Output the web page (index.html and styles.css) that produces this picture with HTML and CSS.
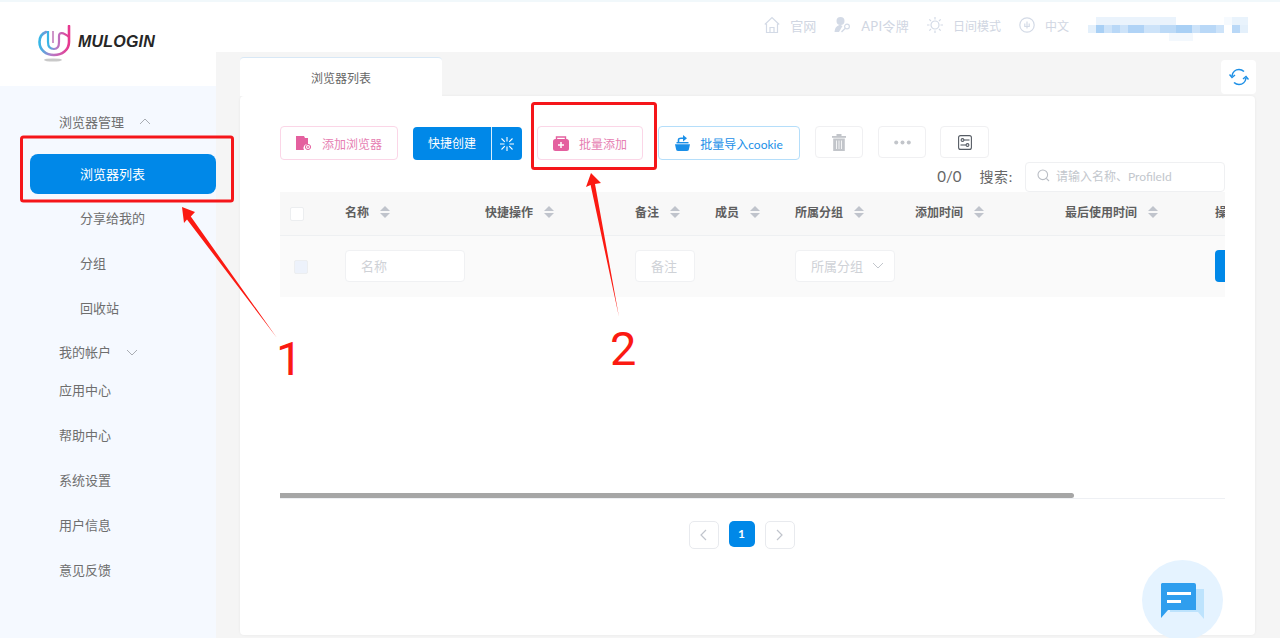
FILE: index.html
```html
<!DOCTYPE html>
<html>
<head>
    <title>MuLogin</title>
    <link rel="stylesheet" href="styles.css">
</head>
<body>
    <div class="app">
        <aside class="sidebar">
            <div class="logo">
                <svg class="logo-mark" width="34" height="38" viewBox="0 0 34 38">
                    <defs>
                        <linearGradient id="logoGrad" x1="0" y1="0" x2="1" y2="0">
                            <stop offset="0" stop-color="#35b6e6"/>
                            <stop offset="0.4" stop-color="#b57cc8"/>
                            <stop offset="1" stop-color="#e8388f"/>
                        </linearGradient>
                    </defs>
                    <ellipse cx="15" cy="35" rx="9" ry="1.6" fill="#c9c9c9"/>
                    <path d="M8 7 C3 9 1.5 13 1.5 17 C1.5 25 8 30 16 30 C24 30 31 25 31 17 L31 1" fill="none" stroke="url(#logoGrad)" stroke-width="2.6" stroke-linecap="round"/>
                    <path d="M10 6 L10 17 C10 21 12 24 16 24 C20 24 21 21 21 17 L21 11 C21 7 25 7 31 12" fill="none" stroke="url(#logoGrad)" stroke-width="2.2"/>
                    <path d="M15 6 L15 18" fill="none" stroke="#c98bc4" stroke-width="1.8"/>
                </svg>
                <span class="logo-text">MULOGIN</span>
            </div>
            <nav class="menu">
                <div class="menu-item menu-parent">浏览器管理
                    <svg class="menu-caret" width="12" height="7" viewBox="0 0 12 7"><path d="M1 6 L6 1 L11 6" fill="none" stroke="#a9adb3"/></svg>
                </div>
                <div class="menu-item menu-active">浏览器列表</div>
                <div class="menu-item menu-sub">分享给我的</div>
                <div class="menu-item menu-sub">分组</div>
                <div class="menu-item menu-sub">回收站</div>
                <div class="menu-item menu-account">我的帐户
                    <svg class="menu-caret" width="12" height="7" viewBox="0 0 12 7"><path d="M1 1 L6 6 L11 1" fill="none" stroke="#a9adb3"/></svg>
                </div>
                <div class="menu-item">应用中心</div>
                <div class="menu-item">帮助中心</div>
                <div class="menu-item">系统设置</div>
                <div class="menu-item">用户信息</div>
                <div class="menu-item">意见反馈</div>
            </nav>
        </aside>

        <div class="main">
            <header class="topbar">
                <div class="top-link top-large">
                    <svg width="16" height="18" viewBox="0 0 16 18" fill="none" stroke="#d3dae6" stroke-width="1.2"><path d="M0.8 8.5 L8 1.5 L15.2 8.5"/><path d="M2.5 7.5 V16.5 H13.5 V7.5"/><path d="M6 16.5 V11.5 H10 V16.5"/></svg>
                    官网
                </div>
                <div class="top-link top-large top-api">
                    <svg width="17" height="18" viewBox="0 0 17 18"><circle cx="6.5" cy="5" r="4" fill="#d3dae6"/><path d="M0.5 16 C1 11 3.5 9 6.5 9 L8.5 10 L5 16 Z" fill="#d3dae6"/><circle cx="13" cy="10.5" r="2.4" fill="none" stroke="#d3dae6" stroke-width="1.2"/><path d="M11 12.5 L7.5 16" stroke="#d3dae6" stroke-width="1.4"/></svg>
                    API令牌
                </div>
                <div class="top-link">
                    <svg width="16" height="16" viewBox="0 0 16 16" fill="none" stroke="#d3dae6" stroke-width="1.2"><circle cx="8" cy="8" r="4"/><path d="M8 0 V2.5 M8 13.5 V16 M0 8 H2.5 M13.5 8 H16 M2.3 2.3 L4 4 M12 12 L13.7 13.7 M13.7 2.3 L12 4 M4 12 L2.3 13.7"/></svg>
                    日间模式
                </div>
                <div class="top-link">
                    <svg width="16" height="16" viewBox="0 0 16 16" fill="none" stroke="#d3dae6" stroke-width="1.2"><circle cx="8" cy="8" r="7.2"/><path d="M8 4.5 V11.5 M5.8 6.5 V9.5 H10.2 V6.5"/></svg>
                    中文
                </div>
                <svg class="user-blur" width="160" height="24" viewBox="0 0 160 24">
                    <rect x="8" y="0" width="80" height="8" fill="#eaf3fc"/>
                    <rect x="136" y="0" width="8" height="8" fill="#f6fafe"/>
                    <rect x="144" y="0" width="16" height="8" fill="#e9f3fc"/>
                    <rect x="0" y="8" width="8" height="8" fill="#e4f0fb"/>
                    <rect x="8" y="8" width="8" height="8" fill="#a9d0f5"/>
                    <rect x="16" y="8" width="8" height="8" fill="#cde3f9"/>
                    <rect x="24" y="8" width="8" height="8" fill="#b9d8f7"/>
                    <rect x="32" y="8" width="8" height="8" fill="#cde3f9"/>
                    <rect x="40" y="8" width="16" height="8" fill="#b0d3f6"/>
                    <rect x="56" y="8" width="16" height="8" fill="#cde3f9"/>
                    <rect x="72" y="8" width="16" height="8" fill="#bcdaf7"/>
                    <rect x="88" y="8" width="16" height="8" fill="#a9d0f5"/>
                    <rect x="104" y="8" width="8" height="8" fill="#cde3f9"/>
                    <rect x="112" y="8" width="16" height="8" fill="#b9d8f7"/>
                    <rect x="128" y="8" width="8" height="8" fill="#cde3f9"/>
                    <rect x="144" y="8" width="8" height="8" fill="#b9d8f7"/>
                    <rect x="152" y="8" width="8" height="8" fill="#e4f0fb"/>
                    <rect x="81" y="16" width="24" height="8" fill="#f3f8fd"/>
                </svg>
            </header>

            <div class="tab-row">
                <div class="tab">浏览器列表</div>
                <button class="refresh">
                    <svg width="20" height="18" viewBox="0 0 20 18" fill="none" stroke="#1c8fe6" stroke-width="1.6"><path d="M3 8 C3.5 4 6.5 1.5 10 1.5 C12 1.5 13.5 2.2 15 3.5"/><path d="M17 10 C16.5 14 13.5 16.5 10 16.5 C8 16.5 6.5 15.8 5 14.5"/><path d="M0.5 6.5 L3 9.5 L6 7" stroke-width="1.4"/><path d="M14 11 L17 8.5 L19.5 11.5" stroke-width="1.4"/></svg>
                </button>
            </div>

            <section class="card">
                <div class="toolbar">
                    <button class="btn btn-pink btn-add">
                        <svg width="16" height="14" viewBox="0 0 16 14"><path d="M0 0 H8 L9 2 H12 V8 A4 4 0 0 0 8 14 H0 Z" fill="#e4609f"/><circle cx="12" cy="11" r="2.6" fill="none" stroke="#e4609f"/><path d="M10.8 11 H13.2 M12 9.8 V12.2" stroke="#e4609f" stroke-width="0.8"/></svg>
                        添加浏览器
                    </button>
                    <div class="btn-quick">
                        <span class="quick-label">快捷创建</span>
                        <span class="quick-icon">
                            <svg width="14" height="14" viewBox="0 0 14 14" stroke="#fff" stroke-width="1.1"><path d="M7 0 V4.5 M7 9.5 V14 M0 7 H4.5 M9.5 7 H14 M1.5 1.5 L4.8 4.8 M9.2 9.2 L12.5 12.5 M12.5 1.5 L9.2 4.8 M4.8 9.2 L1.5 12.5"/></svg>
                        </span>
                    </div>
                    <button class="btn btn-pink btn-batch">
                        <svg width="16" height="15" viewBox="0 0 16 15"><path d="M3.5 3 V1 H12.5 V3" fill="none" stroke="#e4609f" stroke-width="1.4"/><rect x="0" y="3" width="16" height="12" rx="2.5" fill="#e4609f"/><path d="M8 6 V12 M5 9 H11" stroke="#fff" stroke-width="1.5"/></svg>
                        批量添加
                    </button>
                    <button class="btn btn-blue btn-cookie">
                        <svg width="15" height="16" viewBox="0 0 15 16"><path d="M0 9.2 H15 L14 14 A2 2 0 0 1 12 16 H3 A2 2 0 0 1 1 14 Z" fill="#1a8fe8"/><rect x="1.5" y="7" width="12" height="1.4" fill="#1a8fe8"/><path d="M3.5 7 V5 C3.5 3.8 4.5 3.2 6 3.2 H9" fill="none" stroke="#1a8fe8" stroke-width="1.6"/><path d="M8 0 L12 3.2 L8 6.4 Z" fill="#1a8fe8"/></svg>
                        批量导入cookie
                    </button>
                    <button class="btn btn-icon btn-trash">
                        <svg width="14" height="17" viewBox="0 0 14 17" fill="#c2c5ca"><rect x="0" y="2" width="14" height="1.8"/><rect x="4.5" y="0" width="5" height="2.2"/><path d="M1.2 4.6 H12.8 V17 H1.2 Z M4.2 6.5 V15 H5 V6.5 Z M6.6 6.5 V15 H7.4 V6.5 Z M9 6.5 V15 H9.8 V6.5 Z" fill-rule="evenodd"/></svg>
                    </button>
                    <button class="btn btn-icon btn-more">
                        <svg width="17" height="5" viewBox="0 0 17 5" fill="#c2c5ca"><circle cx="2.2" cy="2.5" r="2"/><circle cx="8.5" cy="2.5" r="2"/><circle cx="14.8" cy="2.5" r="2"/></svg>
                    </button>
                    <button class="btn btn-icon btn-config">
                        <svg width="14" height="15" viewBox="0 0 14 15" fill="none" stroke="#555b63" stroke-width="1.1"><rect x="0.6" y="0.6" width="12.8" height="13.8" rx="2"/><circle cx="4.5" cy="5" r="1.4"/><path d="M6 5 H11.5"/><circle cx="9.5" cy="10" r="1.4"/><path d="M2.5 10 H8"/></svg>
                    </button>
                </div>

                <div class="search-row">
                    <span class="count">0/0</span>
                    <span class="search-label">搜索:</span>
                    <div class="search-box">
                        <svg width="13" height="13" viewBox="0 0 13 13" fill="none" stroke="#b9bdc4" stroke-width="1.1"><circle cx="5.8" cy="5.8" r="4.8"/><path d="M9.3 9.3 L12 12"/></svg>
                        请输入名称、ProfileId
                    </div>
                </div>

                <div class="table">
                    <div class="cell head head-check"><span class="check"></span></div>
                    <div class="cell head">名称<i class="sort"></i></div>
                    <div class="cell head">快捷操作<i class="sort"></i></div>
                    <div class="cell head">备注<i class="sort"></i></div>
                    <div class="cell head">成员<i class="sort"></i></div>
                    <div class="cell head">所属分组<i class="sort"></i></div>
                    <div class="cell head">添加时间<i class="sort"></i></div>
                    <div class="cell head">最后使用时间<i class="sort"></i></div>
                    <div class="cell head">操作</div>

                    <div class="cell filter filter-check"><span class="check check-off"></span></div>
                    <div class="cell filter"><span class="field field-name">名称</span></div>
                    <div class="cell filter"></div>
                    <div class="cell filter"><span class="field field-note">备注</span></div>
                    <div class="cell filter"></div>
                    <div class="cell filter">
                        <span class="field field-group">所属分组
                            <svg width="12" height="7" viewBox="0 0 12 7"><path d="M1 1 L6 6 L11 1" fill="none" stroke="#c2c6cc"/></svg>
                        </span>
                    </div>
                    <div class="cell filter"></div>
                    <div class="cell filter"></div>
                    <div class="cell filter"><span class="action-btn"></span></div>
                </div>

                <div class="scroll-track"><div class="scroll-thumb"></div></div>

                <div class="pager">
                    <span class="page-arrow"><svg width="7" height="12" viewBox="0 0 7 12"><path d="M6 1 L1 6 L6 11" fill="none" stroke="#c0c4cc" stroke-width="1.2"/></svg></span>
                    <span class="page-num">1</span>
                    <span class="page-arrow"><svg width="7" height="12" viewBox="0 0 7 12"><path d="M1 1 L6 6 L1 11" fill="none" stroke="#c0c4cc" stroke-width="1.2"/></svg></span>
                </div>
            </section>
        </div>
    </div>

    <div class="chat">
        <svg width="44" height="36" viewBox="0 0 44 36">
            <path d="M9 6 H43 V36 L37 29 H9 Z" fill="#bde3fd"/>
            <path d="M1 0 H33 A2 2 0 0 1 35 2 V27 H7 L0 35 V1 Z" fill="#2f9eee"/>
            <rect x="6" y="9" width="24" height="3" fill="#fff"/>
            <rect x="6" y="17" width="14" height="3" fill="#fff"/>
        </svg>
    </div>

    <!-- marks drawn over the screenshot -->
    <svg class="marks" width="1280" height="638" viewBox="0 0 1280 638">
        <rect x="21.5" y="137" width="211" height="64" rx="2" fill="none" stroke="#f5161a" stroke-width="3"/>
        <rect x="532.5" y="103.5" width="123" height="65" rx="2" fill="none" stroke="#f5161a" stroke-width="3"/>
        <polygon points="182,207 195,212 190.8,216.6 277,338 187,219.4 184,223" fill="#fb1a12"/>
        <polygon points="591,173 601,183 595,184 619,317 590.6,185 586,187" fill="#fb1a12"/>
    </svg>
    <span class="mark-num mark-one">1</span>
    <span class="mark-num mark-two">2</span>
</body>
</html>
```

FILE: styles.css
```css
body {
    font-family: Lato, "Noto Sans CJK SC", sans-serif;
    margin: 0;
    height: 100vh;
    overflow: hidden;
    position: relative;
    background-color: #f5f5f5;
    color: #666;
}
button {
    font-family: inherit;
    cursor: pointer;
}
.app {
    display: flex;
    height: 100%;
}

/* sidebar */
.sidebar {
    width: 216px;
    flex-shrink: 0;
    background-color: #f5f9ff;
}
.logo {
    height: 84px;
    border-top: 2px solid #f1f8fb;
    background-color: #fff;
    display: flex;
    align-items: flex-start;
    padding-left: 38px;
}
.logo-mark {
    margin-top: 23px;
}
.logo-text {
    margin-top: 31px;
    margin-left: 6px;
    font-family: "Liberation Sans", sans-serif;
    font-size: 16px;
    font-weight: bold;
    font-style: italic;
    color: #262626;
    letter-spacing: 0.2px;
}
.menu {
    padding-top: 14px;
}
.menu-item {
    height: 45px;
    line-height: 45px;
    padding-left: 59px;
    font-size: 13px;
    color: #6e6e6e;
    display: flex;
    align-items: center;
}
.menu-caret {
    margin-left: 15px;
}
.menu-parent .menu-caret {
    margin-top: -2px;
}
.menu-active {
    height: 40px;
    line-height: 40px;
    margin: 9px 0 2px 30px;
    padding-left: 50px;
    background-color: #0088e8;
    color: #fff;
    border-radius: 8px;
}
.menu-sub {
    padding-left: 80px;
}
.menu-account {
    height: 38px;
    line-height: 38px;
    margin: 2px 0 -3px;
}

/* top bar */
.main {
    flex: 1;
    min-width: 0;
    display: flex;
    flex-direction: column;
}
.topbar {
    height: 50px;
    border-top: 2px solid #f1f8fb;
    background-color: #fff;
    display: flex;
    align-items: center;
    justify-content: flex-end;
    padding-right: 32px;
    gap: 18px;
}
.top-link {
    display: flex;
    align-items: center;
    gap: 10px;
    font-size: 12px;
    color: #d0d6e2;
    margin-top: -4px;
}
.top-large {
    font-size: 13px;
}
.top-api {
    letter-spacing: 0.3px;
}
.user-blur {
    margin-left: 1px;
    margin-top: 4px;
}

/* tabs */
.tab-row {
    height: 44px;
    display: flex;
    justify-content: space-between;
    padding: 0 24px 0 24px;
    position: relative;
}
.tab {
    width: 202px;
    height: 38px;
    margin-top: 5px;
    border-top: 1px solid #d8e8f6;
    border-radius: 4px 4px 0 0;
    background-color: #fff;
    text-align: center;
    line-height: 41px;
    font-size: 12px;
    color: #666;
}
.refresh {
    width: 35px;
    height: 34px;
    margin-top: 8px;
    padding: 0;
    border: none;
    border-radius: 4px;
    background-color: #fff;
    display: flex;
    align-items: center;
    justify-content: center;
}

/* card */
.card {
    margin: 0 25px 3px 24px;
    padding: 30px 30px 0 40px;
    flex: 1;
    background-color: #fff;
    border-radius: 4px;
    box-shadow: 0 0 3px rgba(0, 0, 0, 0.06);
}
.toolbar {
    display: flex;
    gap: 15px;
    height: 34px;
}
.btn {
    height: 34px;
    padding: 0;
    background-color: #fff;
    border: 1px solid #eee;
    border-radius: 4px;
    font-size: 12px;
    display: flex;
    align-items: center;
    justify-content: center;
    gap: 10px;
    box-sizing: border-box;
}
.btn-pink {
    border-color: #fbd6e7;
    color: #e680b2;
}
.btn-add {
    width: 118px;
}
.btn-batch {
    width: 106px;
}
.btn-blue {
    width: 142px;
    border-color: #b5defa;
    color: #1a8fe8;
}
.btn-icon {
    width: 48px;
    height: 32px;
    border-color: #f0f0f2;
}
.btn-config {
    width: 49px;
    margin-left: -1px;
}
.btn-quick {
    width: 109px;
    height: 33px;
    margin-top: 1px;
    display: flex;
    background-color: #0088e8;
    color: #fff;
    border-radius: 4px;
    font-size: 12px;
}
.quick-label {
    width: 78px;
    line-height: 33px;
    text-align: center;
    border-right: 1px solid #d9eefc;
}
.quick-icon {
    flex: 1;
    display: flex;
    align-items: center;
    justify-content: center;
}
.search-row {
    height: 30px;
    margin-top: 2px;
    display: flex;
    align-items: center;
    justify-content: flex-end;
    color: #666;
}
.count {
    font-size: 15px;
    margin-right: 18px;
    padding-bottom: 2px;
}
.search-label {
    font-size: 14px;
    letter-spacing: 0.7px;
    margin-right: 12px;
    padding-bottom: 2px;
}
.search-box {
    width: 200px;
    height: 30px;
    box-sizing: border-box;
    border: 1px solid #eff0f2;
    border-radius: 4px;
    padding: 0 0 3px 11px;
    display: flex;
    align-items: center;
    gap: 6px;
    font-size: 12px;
    color: #c3c7cd;
}

/* table */
.table {
    display: grid;
    grid-template-columns: 65px 140px 150px 80px 80px 120px 150px 150px 80px;
    grid-template-rows: 44px 61px;
    overflow: hidden;
    width: 945px;
}
.cell {
    display: flex;
    align-items: center;
    background-color: #fafafa;
    white-space: nowrap;
}
.head {
    background-color: #f8f8f8;
    border-bottom: 1px solid #eef0f2;
    font-size: 12px;
    font-weight: bold;
    color: #5f5f5f;
    padding-bottom: 4px;
    box-sizing: border-box;
}
.head-check {
    padding-left: 10px;
    padding-bottom: 0;
}
.filter {
    padding-bottom: 2px;
    box-sizing: border-box;
}
.filter-check {
    padding-left: 14px;
    padding-bottom: 0;
}
.check {
    width: 14px;
    height: 14px;
    box-sizing: border-box;
    background-color: #fff;
    border: 1px solid #eceef0;
    border-radius: 2px;
}
.check-off {
    background-color: #edf2fb;
}
.sort {
    width: 10px;
    height: 12px;
    margin-left: 11px;
    position: relative;
}
.sort::before,
.sort::after {
    content: "";
    position: absolute;
    left: 0;
    border-left: 5px solid transparent;
    border-right: 5px solid transparent;
}
.sort::before {
    top: 0;
    border-bottom: 5px solid #c0c4cc;
}
.sort::after {
    bottom: 0;
    border-top: 5px solid #c0c4cc;
}
.field {
    height: 32px;
    box-sizing: border-box;
    background-color: #fff;
    border: 1px solid #f0f1f3;
    border-radius: 4px;
    font-size: 13px;
    color: #cfd2d7;
    display: flex;
    align-items: center;
    padding-left: 15px;
}
.field-name {
    width: 120px;
}
.field-note {
    width: 60px;
}
.field-group {
    width: 100px;
    gap: 9px;
}
.action-btn {
    width: 60px;
    height: 32px;
    background-color: #0088e8;
    border-radius: 4px;
}
.scroll-track {
    margin-top: 196px;
    height: 6px;
    box-sizing: border-box;
    border-bottom: 1px solid #eef0f4;
}
.scroll-thumb {
    width: 794px;
    height: 5px;
    background-color: #a6a6a6;
    border-radius: 0 3px 3px 0;
}
.pager {
    margin-top: 22px;
    padding-right: 22px;
    display: flex;
    justify-content: center;
    align-items: flex-start;
    gap: 10px;
}
.page-arrow {
    width: 30px;
    height: 28px;
    box-sizing: border-box;
    border: 1px solid #e8eaee;
    border-radius: 5px;
    display: flex;
    align-items: center;
    justify-content: center;
}
.page-num {
    width: 26px;
    height: 26px;
    line-height: 26px;
    text-align: center;
    background-color: #0088e8;
    color: #fff;
    font-size: 12px;
    font-weight: bold;
    border-radius: 5px;
}

/* floating chat button */
.chat {
    position: absolute;
    left: 1142px;
    top: 560px;
    width: 81px;
    height: 80px;
    border-radius: 50%;
    background-color: #e5f3ff;
    display: flex;
    align-items: center;
    justify-content: center;
}
.chat svg {
    margin-top: 1px;
}

/* red annotations */
.marks {
    position: absolute;
    left: 0;
    top: 0;
    pointer-events: none;
}
.mark-num {
    position: absolute;
    font-family: Roboto, sans-serif;
    font-size: 47px;
    line-height: 47px;
    color: #fb1a12;
}
.mark-one {
    left: 276px;
    top: 335px;
}
.mark-two {
    left: 610px;
    top: 325px;
}
```
